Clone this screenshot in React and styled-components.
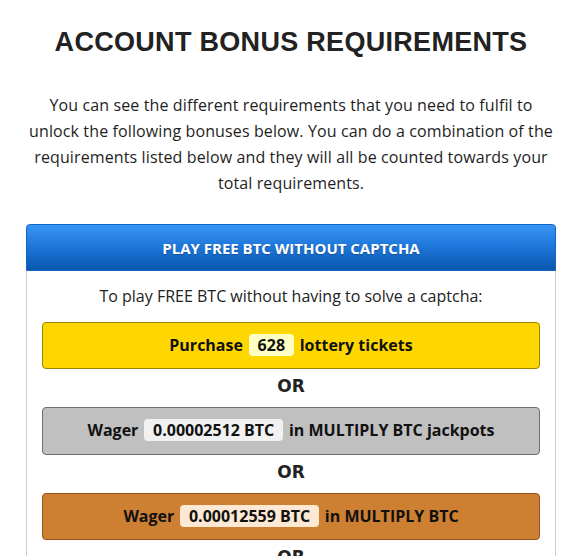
import React from 'react';
import styled, { createGlobalStyle } from 'styled-components';

const GlobalStyle = createGlobalStyle`
  body {
    margin: 0;
    background: #fff;
    font-family: 'Open Sans', 'Noto Sans', sans-serif;
    color: #222;
  }
`;

const Page = styled.div`
  padding: 27px 30px 0 26px;
`;

const Title = styled.h1`
  margin: 0;
  text-align: center;
  font-family: 'Liberation Sans', Arial, sans-serif;
  font-size: 27px;
  font-weight: 700;
  letter-spacing: 0.3px;
  color: #222;
`;

const Intro = styled.p`
  max-width: 528px;
  margin: 34px auto 0;
  text-align: center;
  font-size: 16px;
  line-height: 26px;
  letter-spacing: 0.12px;
  color: #1e1e1e;
`;

const Panel = styled.div`
  margin-top: 28px;
  border: 1px solid #cfcfcf;
  border-top: none;
  border-radius: 4px 4px 0 0;
  background: #fff;
`;

const PanelHeader = styled.div`
  height: 45px;
  display: flex;
  align-items: center;
  justify-content: center;
  margin: 0 -1px;
  border: 1px solid #1466c4;
  border-radius: 4px 4px 0 0;
  background: linear-gradient(to bottom, #3896f6 0%, #1d74d8 50%, #0a57ad 100%);
  color: #fff;
  font-size: 15px;
  font-weight: 700;
  text-transform: uppercase;
  text-shadow: 0 1px 1px rgba(0, 0, 0, 0.25);
`;

const PanelBody = styled.div`
  padding: 13px 15px 20px;
  text-align: center;
`;

const Lead = styled.p`
  margin: 0 0 12px;
  font-size: 16px;
  line-height: 1.6;
  color: #222;
`;

const tones = {
  gold: { bg: '#ffd700', border: '#9a8600', badge: '#ffffc4' },
  silver: { bg: '#c0c0c0', border: '#6e6e6e', badge: '#f1f1f1' },
  bronze: { bg: '#cd7f32', border: '#9b5418', badge: '#fde8d3' },
};

const Requirement = styled.div`
  padding: 10px 8px;
  border: 1px solid ${(p) => tones[p.$tone].border};
  border-radius: 4px;
  background: ${(p) => tones[p.$tone].bg};
  font-size: 16px;
  font-weight: 700;
  line-height: 1.6;
  color: #111;
  text-align: center;
`;

const Amount = styled.span`
  display: inline-block;
  margin: 0 1.5px;
  padding: 0 9px;
  line-height: 22px;
  border-radius: 4px;
  background: ${(p) => tones[p.$tone].badge};
`;

const Or = styled.div`
  margin: 6px 0 10px;
  font-family: 'DejaVu Sans', Verdana, sans-serif;
  font-size: 17px;
  font-weight: 700;
  line-height: 22px;
  color: #222;
`;

export default function App() {
  return (
    <>
      <GlobalStyle />
      <Page>
        <Title>ACCOUNT BONUS REQUIREMENTS</Title>
        <Intro>
          You can see the different requirements that you need to fulfil to unlock the
          following bonuses below. You can do a combination of the requirements listed
          below and they will all be counted towards your total requirements.
        </Intro>
        <Panel>
          <PanelHeader>Play free BTC without captcha</PanelHeader>
          <PanelBody>
            <Lead>To play FREE BTC without having to solve a captcha:</Lead>
            <Requirement $tone="gold">
              Purchase <Amount $tone="gold">628</Amount> lottery tickets
            </Requirement>
            <Or>OR</Or>
            <Requirement $tone="silver">
              Wager <Amount $tone="silver">0.00002512 BTC</Amount> in MULTIPLY BTC jackpots
            </Requirement>
            <Or>OR</Or>
            <Requirement $tone="bronze">
              Wager <Amount $tone="bronze">0.00012559 BTC</Amount> in MULTIPLY BTC
            </Requirement>
            <Or>OR</Or>
            <Requirement $tone="gold">
              Deposit <Amount $tone="gold">0.00100000 BTC</Amount> in your account
            </Requirement>
          </PanelBody>
        </Panel>
      </Page>
    </>
  );
}
